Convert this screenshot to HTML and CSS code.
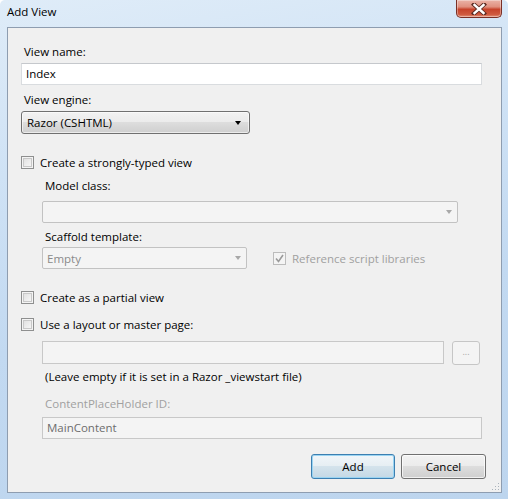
FILE: index.html
```html
<!DOCTYPE html>
<html>
<head>
<meta charset="utf-8">
<title>Add View</title>
<link rel="stylesheet" href="styles.css">
</head>
<body>
<div class="window">
  <div class="titlebar">
    <span class="title">Add View</span>
    <span class="close">
      <svg width="16" height="12" viewBox="0 0 16 12"><path d="M3 1.5 L13 10.5 M13 1.5 L3 10.5" stroke="#5a2a22" stroke-width="4.2" stroke-linecap="square" fill="none"/><path d="M3.5 2 L12.5 10 M12.5 2 L3.5 10" stroke="#ffffff" stroke-width="2.4" stroke-linecap="square" fill="none"/></svg>
    </span>
  </div>
  <div class="panel">
    <div class="label top-label">View name:</div>
    <div class="textbox wide">Index</div>
    <div class="label">View engine:</div>
    <div class="combo engine"><span>Razor (CSHTML)</span><span class="arrow"></span></div>

    <div class="check-row first-check"><span class="check"></span><span>Create a strongly-typed view</span></div>
    <div class="indent">
      <div class="label">Model class:</div>
      <div class="dd model"><span></span><span class="arrow dim"></span></div>
      <div class="label">Scaffold template:</div>
      <div class="scaffold-row">
        <div class="dd scaffold"><span>Empty</span><span class="arrow dim"></span></div>
        <div class="check-row disabled"><span class="check checked"><svg width="9" height="9" viewBox="0 0 9 9"><path d="M1 4.5 L3.5 7.5 L8 1" stroke="#9a9a9a" stroke-width="1.6" fill="none"/></svg></span><span>Reference script libraries</span></div>
      </div>
    </div>

    <div class="check-row partial"><span class="check"></span><span>Create as a partial view</span></div>
    <div class="check-row layout"><span class="check"></span><span>Use a layout or master page:</span></div>
    <div class="indent">
      <div class="layout-row">
        <div class="textbox dis layoutbox"></div>
        <div class="browse">...</div>
      </div>
      <div class="label note">(Leave empty if it is set in a Razor _viewstart file)</div>
      <div class="label dislabel">ContentPlaceHolder ID:</div>
      <div class="textbox dis main">MainContent</div>
    </div>

    <div class="buttons">
      <div class="btn default">Add</div>
      <div class="btn">Cancel</div>
    </div>
    <div class="grip"></div>
  </div>
</div>
</body>
</html>
```
FILE: styles.css
```css
* { box-sizing: border-box; }
html, body { margin: 0; padding: 0; }
body {
  width: 508px;
  height: 499px;
  overflow: hidden;
  font-family: "Open Sans", "Noto Sans", sans-serif;
  font-size: 11.5px;
  color: #000;
}
.window {
  width: 508px;
  height: 499px;
  background: linear-gradient(170deg, #dfecf8 0%, #cfe2f5 30%, #c2d9f1 60%, #bdd5ee 100%);
  border-radius: 5px 5px 0 0;
  padding: 0 6px 0 7px;
}
.titlebar {
  height: 27px;
  display: flex;
  align-items: flex-start;
  justify-content: space-between;
}
.title {
  font-size: 11.5px;
  margin-top: 4px;
  margin-left: 0;
  color: #000;
}
.close {
  width: 46px;
  height: 18px;
  border: 1px solid #7a3026;
  border-top: none;
  border-radius: 0 0 5px 5px;
  background: linear-gradient(#eab3a7 0%, #e0907f 40%, #c7432b 55%, #cf5a3f 85%, #e4927a 100%);
  display: flex;
  align-items: center;
  justify-content: center;
  box-shadow: inset 0 0 0 1px rgba(255,255,255,0.35);
}
.close svg { display: block; }
.panel {
  position: relative;
  width: 495px;
  height: 466px;
  border: 1px solid #8e9db0;
  background: #f0f0f0;
  padding: 0 18px 0 13px;
}
.label {
  height: 16px;
  line-height: 16px;
  padding-left: 3px;
  white-space: nowrap;
}
.top-label { margin-top: 16px; }
.textbox {
  height: 22px;
  line-height: 20px;
  border: 1px solid #d9dcdf;
  border-top-color: #c5c8cc;
  background: #fff;
  padding-left: 4px;
  margin-top: 3px;
  margin-bottom: 7px;
}
.textbox.wide { width: 461px; }
.combo {
  width: 229px;
  height: 23px;
  margin-top: 3px;
  border: 1px solid #707070;
  border-radius: 3px;
  background: linear-gradient(#f2f2f2 0%, #ebebeb 49%, #dddddd 50%, #cfcfcf 100%);
  display: flex;
  align-items: center;
  justify-content: space-between;
  padding: 0 8px 0 5px;
  box-shadow: inset 0 0 0 1px rgba(255,255,255,0.6);
}
.arrow {
  width: 0; height: 0;
  border-left: 3.5px solid transparent;
  border-right: 3.5px solid transparent;
  border-top: 4px solid #000;
}
.arrow.dim { border-top-color: #a8a8a8; }
.check-row {
  display: flex;
  align-items: center;
  height: 16px;
  white-space: nowrap;
}
.first-check { margin-top: 20px; }
.check {
  width: 13px;
  height: 13px;
  border: 1px solid #8e8f8f;
  background: linear-gradient(135deg, #dcdcdc, #fbfbfb);
  box-shadow: inset 0 0 0 1px #f4f4f4, inset 0 0 0 2px #c8c8c8;
  margin-right: 6px;
  flex: none;
  display: flex;
  align-items: center;
  justify-content: center;
}
.check.checked {
  border-color: #bcbcbc;
  background: #f4f4f4;
  box-shadow: none;
}
.check.checked svg { display: block; }
.disabled { color: #a0a0a0; }
.indent { padding-left: 21px; }
.indent .label { padding-left: 3px; }
.indent > .label:first-child { margin-top: 8px; }
.dd {
  height: 22px;
  border: 1px solid #c2c2c2;
  border-radius: 2px;
  background: #f4f4f4;
  display: flex;
  align-items: center;
  justify-content: space-between;
  padding: 0 5px 0 4px;
  color: #8a8a8a;
}
.dd.model { width: 416px; margin-top: 7px; margin-bottom: 6px; }
.scaffold-row {
  display: flex;
  align-items: center;
  margin-top: 2px;
  height: 22px;
}
.dd.scaffold { width: 205px; margin-right: 26px; }
.partial { margin-top: 20px; }
.layout { margin-top: 11px; }
.layout-row {
  display: flex;
  align-items: flex-start;
  margin-top: 9px;
  height: 24px;
}
.textbox.dis {
  background: #f4f4f4;
  border: 1px solid #c8c8c8;
  color: #6d6d6d;
}
.layoutbox { width: 402px; height: 23px; margin: 0 8px 0 0; }
.browse {
  width: 28px;
  height: 24px;
  border: 1px solid #c6c6c6;
  border-radius: 3px;
  background: #f4f4f4;
  color: #a8a8a8;
  font-size: 9px;
  text-align: center;
  line-height: 20px;
}
.label.note { margin-top: 4px; }
.label.dislabel { margin-top: 11px; color: #a0a0a0; }
.textbox.main { width: 440px; margin-top: 5px; margin-bottom: 0; }
.buttons {
  display: flex;
  justify-content: flex-end;
  gap: 6px;
  margin-top: 15px;
  margin-right: -3px;
}
.btn {
  width: 85px;
  height: 25px;
  border: 1px solid #707070;
  border-radius: 3px;
  background: linear-gradient(#f2f2f2 0%, #ebebeb 49%, #dddddd 50%, #cfcfcf 100%);
  box-shadow: inset 0 0 0 1px rgba(255,255,255,0.7);
  text-align: center;
  line-height: 23px;
}
.btn.default {
  width: 84px;
  border-color: #3c7fb1;
  background: linear-gradient(#f1f6f9 0%, #e6eef3 49%, #d4e3ec 50%, #c4d8e5 100%);
  box-shadow: inset 0 0 0 1px #9ad4f2;
}
.grip {
  position: absolute;
  right: 2px;
  bottom: 2px;
  width: 8px;
  height: 8px;
  background-image: radial-gradient(circle, #a9b2bb 0.8px, transparent 1px);
  background-size: 3px 3px;
  clip-path: polygon(100% 0, 100% 100%, 0 100%);
}
```
